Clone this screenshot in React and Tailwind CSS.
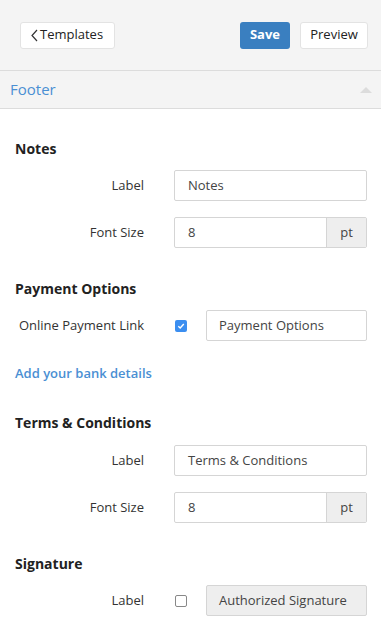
import React from "react";

const font = { fontFamily: "'Open Sans', 'Liberation Sans', sans-serif" };

function Row({ label, children, className = "" }) {
  return (
    <div className={"flex items-center h-[31px] " + className}>
      <div className="w-[145px] text-right text-[13px] text-[#333] pr-px">{label}</div>
      <div className="ml-[29px] flex-1 flex items-center">{children}</div>
    </div>
  );
}

function TextInput({ value }) {
  return (
    <div className="h-[31px] w-[193px] border border-[#d5d5d5] rounded-[2px] bg-white flex items-center px-[13px] text-[13px] text-[#444]">
      {value}
    </div>
  );
}

function FontSize() {
  return (
    <div className="h-[31px] w-[193px] border border-[#d5d5d5] rounded-[2px] bg-white flex text-[13px] text-[#444]">
      <div className="flex-1 flex items-center px-[13px]">8</div>
      <div className="w-[40px] border-l border-[#d5d5d5] bg-[#eeeeee] flex items-center justify-center">pt</div>
    </div>
  );
}

function Heading({ children, className = "" }) {
  return <div className={"text-[14px] leading-[20px] font-bold text-[#222] pl-[15px] " + className}>{children}</div>;
}

export default function App() {
  return (
    <div className="w-[381px] h-[641px] bg-white overflow-hidden" style={font}>
      <div className="h-[71px] bg-[#f4f4f4] border-b border-[#dcdcdc] flex items-center px-[20px]">
        <div className="h-[27px] w-[95px] bg-white border border-[#e3e3e3] rounded-[3px] flex items-center pl-[10px] text-[13px] text-[#222]">
          <svg width="7" height="13" viewBox="0 0 7 13" className="mr-[2px]">
            <path d="M6 1 L1 6.5 L6 12" fill="none" stroke="#333" strokeWidth="1.2" />
          </svg>
          Templates
        </div>
        <div className="flex-1" />
        <div className="h-[27px] w-[50px] bg-[#3a7fc0] rounded-[3px] flex items-center justify-center text-[13px] font-bold text-white">
          Save
        </div>
        <div className="ml-[10px] h-[27px] w-[68px] bg-white border border-[#e3e3e3] rounded-[3px] flex items-center justify-center text-[13px] text-[#222] mr-[-7px]">
          Preview
        </div>
      </div>
      <div className="h-[38px] bg-[#f4f4f4] border-b border-[#dcdcdc] flex items-center justify-between pl-[10px] pr-[9px]">
        <span className="text-[15px] text-[#4a8fd3]">Footer</span>
        <svg width="12" height="6" viewBox="0 0 12 6">
          <path d="M0 6 L6 0 L12 6 Z" fill="#dcdcdc" />
        </svg>
      </div>

      <Heading className="mt-[30px]">Notes</Heading>
      <Row label="Label" className="mt-[11px]"><TextInput value="Notes" /></Row>
      <Row label="Font Size" className="mt-[16px]"><FontSize /></Row>

      <Heading className="mt-[31px]">Payment Options</Heading>
      <Row label="Online Payment Link" className="mt-[11px]">
        <div className="flex items-center">
          <div className="w-[12px] h-[12px] rounded-[2px] bg-[#3b8ef0] flex items-center justify-center ml-[1px]">
            <svg width="8" height="8" viewBox="0 0 8 8">
              <path d="M1.3 4.2 L3.2 6 L6.8 2" fill="none" stroke="white" strokeWidth="1.4" />
            </svg>
          </div>
          <div className="ml-[19px] h-[31px] w-[161px] border border-[#d5d5d5] rounded-[2px] bg-white flex items-center px-[12px] text-[13px] text-[#444]">
            Payment Options
          </div>
        </div>
      </Row>
      <div className="mt-[22px] pl-[15px] text-[13px] leading-[20px] font-semibold text-[#4a8fd3]">Add your bank details</div>

      <Heading className="mt-[30px]">Terms &amp; Conditions</Heading>
      <Row label="Label" className="mt-[12px]"><TextInput value="Terms & Conditions" /></Row>
      <Row label="Font Size" className="mt-[16px]"><FontSize /></Row>

      <Heading className="mt-[31px]">Signature</Heading>
      <Row label="Label" className="mt-[11px]">
        <div className="flex items-center">
          <div className="w-[12px] h-[12px] rounded-[2px] border border-[#888] bg-white ml-[1px]" />
          <div className="ml-[19px] h-[31px] w-[161px] border border-[#d5d5d5] rounded-[2px] bg-[#eeeeee] flex items-center px-[12px] text-[13px] text-[#444]">
            Authorized Signature
          </div>
        </div>
      </Row>
    </div>
  );
}
